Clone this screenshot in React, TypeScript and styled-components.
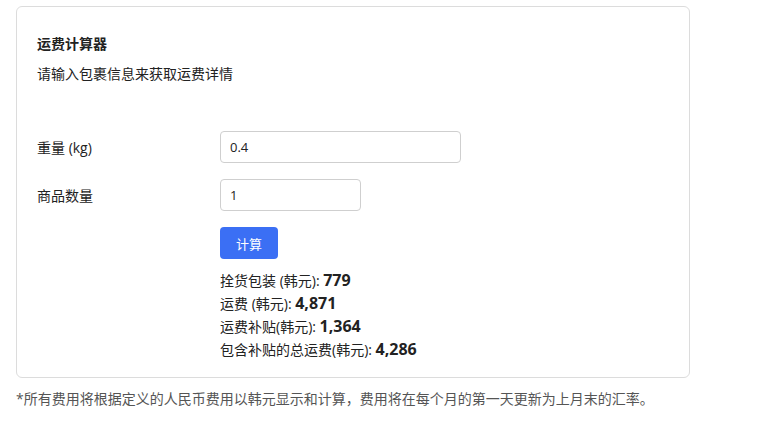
import styled, { createGlobalStyle } from "styled-components";

const font = `"Open Sans", "Noto Sans CJK SC", sans-serif`;

const GlobalStyle = createGlobalStyle`
  body {
    margin: 0;
    background: #ffffff;
    font-family: ${font};
    color: #222;
  }
`;

const Page = styled.div`
  padding: 6px 0 0 16px;
  width: 674px;
`;

const Card = styled.div`
  border: 1px solid #dcdcdc;
  border-radius: 6px;
  padding: 27px 20px 18px 20px;
  height: 372px;
  box-sizing: border-box;
`;

const Title = styled.div`
  font-size: 14px;
  font-weight: 700;
  line-height: 20px;
`;

const Subtitle = styled.div`
  font-size: 14px;
  line-height: 20px;
  margin-top: 10px;
`;

const Form = styled.div`
  display: flex;
  flex-direction: column;
  gap: 16px;
  margin-top: 47px;
`;

const Row = styled.div`
  display: flex;
  align-items: center;
`;

const Label = styled.div`
  width: 183px;
  font-size: 14px;
`;

const Input = styled.input<{ $w: number }>`
  width: ${(p) => p.$w}px;
  height: 32px;
  box-sizing: border-box;
  border: 1px solid #cfcfcf;
  border-radius: 4px;
  padding: 0 9px;
  font-family: ${font};
  font-size: 13px;
  color: #222;
  outline: none;
`;

const Right = styled.div`
  margin-left: 183px;
  display: flex;
  flex-direction: column;
  align-items: flex-start;
`;

const Button = styled.button`
  width: 58px;
  height: 32px;
  border: none;
  border-radius: 4px;
  background: #3b6ff4;
  color: #fff;
  font-family: ${font};
  font-size: 13px;
  cursor: pointer;
`;

const Results = styled.div`
  margin-top: 10px;
  display: flex;
  flex-direction: column;
`;

const ResultLine = styled.div`
  font-size: 14px;
  line-height: 22px;
`;

const Value = styled.span`
  font-size: 16px;
  font-weight: 700;
`;

const Footer = styled.div`
  margin-top: 10px;
  font-size: 14px;
  line-height: 22px;
  color: #555;
  white-space: nowrap;
`;

const results = [
  ["拴货包装 (韩元): ", "779"],
  ["运费 (韩元): ", "4,871"],
  ["运费补贴(韩元): ", "1,364"],
  ["包含补贴的总运费(韩元): ", "4,286"],
];

export default function App() {
  return (
    <>
      <GlobalStyle />
      <Page>
        <Card>
          <Title>运费计算器</Title>
          <Subtitle>请输入包裹信息来获取运费详情</Subtitle>
          <Form>
            <Row>
              <Label>重量 (kg)</Label>
              <Input $w={241} defaultValue="0.4" />
            </Row>
            <Row>
              <Label>商品数量</Label>
              <Input $w={141} defaultValue="1" />
            </Row>
            <Right>
              <Button>计算</Button>
              <Results>
                {results.map(([k, v]) => (
                  <ResultLine key={k}>
                    {k}
                    <Value>{v}</Value>
                  </ResultLine>
                ))}
              </Results>
            </Right>
          </Form>
        </Card>
        <Footer>
          *所有费用将根据定义的人民币费用以韩元显示和计算，费用将在每个月的第一天更新为上月末的汇率。
        </Footer>
      </Page>
    </>
  );
}
